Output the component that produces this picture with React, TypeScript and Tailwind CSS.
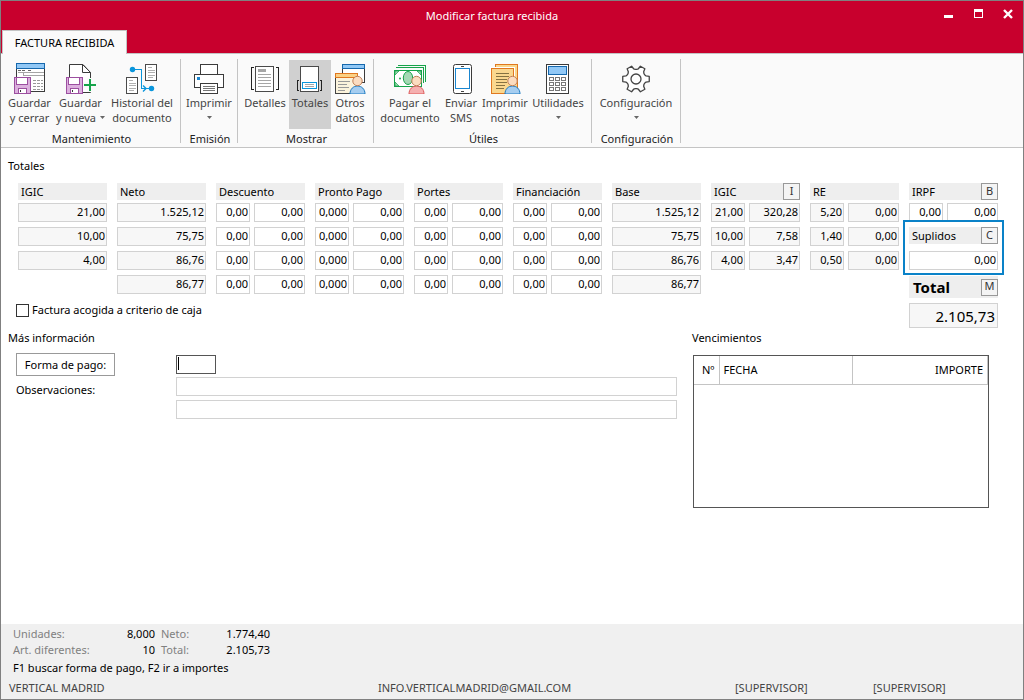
import type { ReactNode } from "react";

const gearPath = (() => {
  const points: string[] = [];
  const at = (radius: number, degrees: number) => {
    const a = (degrees * Math.PI) / 180;
    return `${(16 + radius * Math.cos(a)).toFixed(2)} ${(17 + radius * Math.sin(a)).toFixed(2)}`;
  };
  for (let i = 0; i < 6; i++) {
    const c = i * 60;
    points.push(at(9.6, c - 26), at(10.5, c - 17), at(13.5, c - 11), at(13.5, c + 11), at(10.5, c + 17), at(9.6, c + 26));
  }
  return `M${points.join("L")}Z`;
})();

function Icon({ children }: { children: ReactNode }) {
  return (
    <svg viewBox="0 0 32 32" className="block h-8 w-8 shrink-0" fill="none" aria-hidden="true">
      {children}
    </svg>
  );
}

function Floppy({ x = 0 }: { x?: number }) {
  return (
    <g transform={`translate(${x} 0)`} shapeRendering="crispEdges">
      <rect x="0.5" y="15.5" width="16" height="16" fill="#dcb0de" stroke="#9c4fa0" />
      <rect x="2.5" y="15.5" width="11" height="7" fill="#fff" stroke="#9c4fa0" />
      <rect x="4.5" y="26.5" width="8" height="5" fill="#fff" stroke="#9c4fa0" />
      <path d="M6.5 28v2" stroke="#333" />
    </g>
  );
}

function Person({ body, line, x = 0 }: { body: string; line: string; x?: number }) {
  return (
    <g transform={`translate(${x} 0)`}>
      <path d="M16 32c0-5 3.400-8 7.500-8s7.500 3 7.500 8z" fill={body} stroke={line} />
      <circle cx="23.500" cy="19" r="4.700" fill="#fbdcc0" stroke="#c08058" />
    </g>
  );
}

const icons = {
  saveClose: (
    <Icon>
      <g shapeRendering="crispEdges">
        <rect x="2.5" y="1.5" width="28" height="28" fill="#fff" stroke="#3b3b3b" />
        <rect x="2.5" y="1.5" width="28" height="5" fill="#91c8f6" stroke="#1668ad" />
        <path d="M4 10.500h26M9.500 10v4M9 13.500h21" stroke="#a5a5a5" />
        <path d="M4 8.500h3M8 8.500h3M14 8.500h3" stroke="#666" />
        <path d="M19 18.500h10M19 21.500h10M19 24.500h10M19 27.500h10" stroke="#999" strokeDasharray="3 1" />
      </g>
      <Floppy />
    </Icon>
  ),
  saveNew: (
    <Icon>
      <path d="M4.500 2.500H18l7.500 8V30.500H4.500z" fill="#fff" stroke="#3b3b3b" />
      <path d="M17.500 2.500v8h8z" fill="#fff" stroke="#3b3b3b" />
      <Floppy x={1} />
      <path d="M25 16v14M18 23h14" stroke="#fafafa" strokeWidth="5" />
      <path d="M25 17v12M19 23h12" stroke="#16a34a" strokeWidth="2" shapeRendering="crispEdges" />
    </Icon>
  ),
  history: (
    <Icon>
      <g shapeRendering="crispEdges">
        <rect x="19.500" y="2.500" width="11" height="16" fill="#fff" stroke="#4a4a4a" />
        <rect x="0.500" y="15.500" width="11" height="16" fill="#fff" stroke="#4a4a4a" />
        <path d="M22 5.500h4M22 8.500h7M22 10.500h7M22 13.500h7M22 15.500h5M3 18.500h4M3 21.500h7M3 23.500h7M3 26.500h7M3 28.500h5" stroke="#b0b0b0" />
        <path d="M6 7.500h9.500v19h9" stroke="#0a96dc" />
      </g>
      <path d="M17 23.500l3 3-3 3" stroke="#0a96dc" strokeWidth="1.400" />
      <circle cx="6.500" cy="7.500" r="2.700" fill="#0a96dc" />
      <circle cx="25.500" cy="26.500" r="2.700" fill="#0a96dc" />
    </Icon>
  ),
  printer: (
    <Icon>
      <g shapeRendering="crispEdges" stroke="#3b3b3b">
        <rect x="7.500" y="2.500" width="17" height="10" fill="#fff" />
        <rect x="1.500" y="12.500" width="29" height="13" fill="#fff" />
        <rect x="7.500" y="21.500" width="17" height="10" fill="#fff" />
        <path d="M10 24.500h12M10 26.500h12M10 28.500h12" stroke="#777" />
        <rect x="4" y="15" width="3" height="3" fill="#1a86d0" stroke="none" />
      </g>
    </Icon>
  ),
  details: (
    <Icon>
      <g shapeRendering="crispEdges">
        <path d="M5 5.500H2.500v22H5M27 5.500h2.500v22H27" stroke="#222" />
        <rect x="6.500" y="4.500" width="18" height="25" fill="#fff" stroke="#4a4a4a" />
        <rect x="9" y="7" width="8" height="3" fill="#a6a6a6" />
        <path d="M9 12.500h13M9 15.500h13M9 18.500h13M9 21.500h13M9 24.500h13" stroke="#a6a6a6" />
      </g>
    </Icon>
  ),
  totals: (
    <Icon>
      <g shapeRendering="crispEdges">
        <path d="M5 18.500H3.500v10H5M26 18.500h1.500v10H26" stroke="#222" />
        <rect x="6.500" y="4.500" width="18" height="25" fill="#fff" stroke="#4a4a4a" />
        <rect x="8.500" y="20.500" width="14" height="6" fill="#fff" stroke="#0a96dc" />
        <path d="M11 22.500h9M11 24.500h9" stroke="#a6a6a6" />
      </g>
    </Icon>
  ),
  other: (
    <Icon>
      <g shapeRendering="crispEdges">
        <rect x="8.500" y="2.500" width="22" height="18" fill="#fff" stroke="#3b3b3b" />
        <rect x="8.500" y="2.500" width="22" height="4" fill="#91c8f6" stroke="#1668ad" />
        <rect x="1.500" y="11.500" width="22" height="20" fill="#fbf3dc" stroke="#444" />
        <rect x="1.500" y="11.500" width="22" height="4" fill="#fbd184" stroke="#e07820" />
        <path d="M4 19.500h12M4 22.500h9M4 25.500h11M4 28.500h7" stroke="#999" />
      </g>
      <Person body="#a5cdf0" line="#1a78c0" />
    </Icon>
  ),
  pay: (
    <Icon>
      <g shapeRendering="crispEdges">
        <path d="M4 3.500h27.500v16M2 5.500h27.500v15" stroke="#16a34a" />
        <rect x="0.500" y="8.500" width="27" height="16" fill="#fff" stroke="#16a34a" />
      </g>
      <path d="M1 9h4l-4 4zM27 9h-4l4 4zM1 24h4l-4-4z" fill="#a4d8b4" stroke="#16a34a" strokeWidth="0.700" />
      <ellipse cx="14" cy="16" rx="4.700" ry="6.500" fill="#a4d8b4" stroke="#16a34a" />
      <circle cx="6" cy="16.500" r="1" fill="#16a34a" />
      <Person body="#f5b0b0" line="#dc5858" x={-1} />
    </Icon>
  ),
  sms: (
    <Icon>
      <rect x="8.500" y="2.500" width="18" height="29" rx="2" fill="#fff" stroke="#3b3b3b" />
      <rect x="10.500" y="6.500" width="14" height="20" stroke="#1a86d0" shapeRendering="crispEdges" />
      <path d="M16 4.500h3M16 29.500h3" stroke="#444" shapeRendering="crispEdges" />
    </Icon>
  ),
  notes: (
    <Icon>
      <g shapeRendering="crispEdges" stroke="#e07820">
        <rect x="6.500" y="2.500" width="22" height="24" fill="#fad78e" />
        <rect x="2.500" y="6.500" width="22" height="25" fill="#fad78e" stroke="#fff" strokeWidth="3" />
        <rect x="2.500" y="6.500" width="22" height="25" fill="#fad78e" />
        <path d="M7 11.500h13M7 14.500h13M7 17.500h11M7 20.500h11M7 23.500h9M7 26.500h8" stroke="#857242" />
      </g>
      <Person body="#a5cdf0" line="#1a78c0" />
    </Icon>
  ),
  calculator: (
    <Icon>
      <g shapeRendering="crispEdges">
        <rect x="4.500" y="2.500" width="22" height="29" fill="#fff" stroke="#3b3b3b" />
        <rect x="6.500" y="4.500" width="18" height="8" fill="#91c8f6" stroke="#1668ad" />
        {[15.5, 20.5, 25.5].map((y) =>
          [7.5, 13.5, 19.5].map((x) => <rect key={`${x}-${y}`} x={x} y={y} width="4" height="3" stroke="#777" />),
        )}
      </g>
    </Icon>
  ),
  gear: (
    <Icon>
      <path d={gearPath} stroke="#444" strokeWidth="1.300" strokeLinejoin="round" fill="#fff" />
      <circle cx="16" cy="17" r="5" stroke="#444" strokeWidth="1.300" />
    </Icon>
  ),
};

function Caret() {
  return (
    <svg viewBox="0 0 5 3" className="inline-block h-[3px] w-[5px] align-middle" aria-hidden="true">
      <path d="M0 0h5L2.500 3z" fill="#666" />
    </svg>
  );
}

type Tool = { width: string; icon: ReactNode; first: string; second?: string; menu?: boolean; active?: boolean };

function ToolButton({ width, icon, first, second, menu, active }: Tool) {
  return (
    <button
      type="button"
      aria-pressed={active}
      className={`flex h-[69px] shrink-0 flex-col items-center whitespace-nowrap pt-0.5 leading-[15px] text-[#444] ${width} ${active ? "bg-[#d0d0d0]" : ""}`}
    >
      {icon}
      <span className="mt-px">{first}</span>
      <span className="flex h-[15px] items-center gap-1">
        {second}
        {menu && <Caret />}
      </span>
    </button>
  );
}

function ToolGroup({ label, pad, tools }: { label: string; pad: string; tools: Tool[] }) {
  return (
    <section aria-label={label} className="flex flex-col border-r border-[#c4c4c4] pt-px">
      <div className={`flex ${pad}`}>
        {tools.map((tool) => (
          <ToolButton key={tool.first + tool.second} {...tool} />
        ))}
      </div>
      <div className="mt-0.5 whitespace-nowrap pl-0.5 text-center leading-[15px] text-[#222]">{label}</div>
    </section>
  );
}

const groups: { label: string; pad: string; tools: Tool[] }[] = [
  {
    label: "Mantenimiento",
    pad: "pl-[3px] pr-0.5",
    tools: [
      { width: "w-[51px]", icon: icons.saveClose, first: "Guardar", second: "y cerrar" },
      { width: "w-[51px]", icon: icons.saveNew, first: "Guardar", second: "y nueva", menu: true },
      { width: "w-[72px]", icon: icons.history, first: "Historial del", second: "documento" },
    ],
  },
  { label: "Emisión", pad: "", tools: [{ width: "w-[56px]", icon: icons.printer, first: "Imprimir", menu: true }] },
  {
    label: "Mostrar",
    pad: "pl-[3px] pr-1",
    tools: [
      { width: "w-[48px]", icon: icons.details, first: "Detalles" },
      { width: "w-[42px]", icon: icons.totals, first: "Totales", active: true },
      { width: "w-[38px]", icon: icons.other, first: "Otros", second: "datos" },
    ],
  },
  {
    label: "Útiles",
    pad: "pl-1 pr-[5px]",
    tools: [
      { width: "w-[64px]", icon: icons.pay, first: "Pagar el", second: "documento" },
      { width: "w-[38px]", icon: icons.sms, first: "Enviar", second: "SMS" },
      { width: "w-[50px]", icon: icons.notes, first: "Imprimir", second: "notas" },
      { width: "w-[56px]", icon: icons.calculator, first: "Utilidades", menu: true },
    ],
  },
  { label: "Configuración", pad: "", tools: [{ width: "w-[88px]", icon: icons.gear, first: "Configuración", menu: true }] },
];

type Column = { name: string; rows: string[][]; editable?: boolean; letter?: string };

const zeros = (rate: string) => [0, 1, 2, 3].map(() => [rate, "0,00"]);

const columns: Column[] = [
  { name: "IGIC", rows: [["21,00"], ["10,00"], ["4,00"]] },
  { name: "Neto", rows: [["1.525,12"], ["75,75"], ["86,76"], ["86,77"]] },
  { name: "Descuento", rows: zeros("0,00"), editable: true },
  { name: "Pronto Pago", rows: zeros("0,000"), editable: true },
  { name: "Portes", rows: zeros("0,00"), editable: true },
  { name: "Financiación", rows: zeros("0,00"), editable: true },
  { name: "Base", rows: [["1.525,12"], ["75,75"], ["86,76"], ["86,77"]] },
  { name: "IGIC", rows: [["21,00", "320,28"], ["10,00", "7,58"], ["4,00", "3,47"]], letter: "I" },
  { name: "RE", rows: [["5,20", "0,00"], ["1,40", "0,00"], ["0,50", "0,00"]] },
];

function ColumnHeader({ name, letter }: { name: string; letter?: string }) {
  return (
    <div className="flex h-[17px] items-center justify-between bg-[#eee] pl-[3px]">
      <span className="whitespace-nowrap">{name}</span>
      {letter && <LetterButton letter={letter} />}
    </div>
  );
}

function LetterButton({ letter }: { letter: string }) {
  return (
    <button
      type="button"
      className="flex h-[17px] w-[17px] items-center justify-center border border-[#999] bg-[#f4f4f4] pb-0.5 text-[#333]"
    >
      {letter}
    </button>
  );
}

function Amount({ value, label, editable, grow }: { value: string; label: string; editable?: boolean; grow: boolean }) {
  return (
    <input
      aria-label={label}
      defaultValue={value}
      readOnly={!editable}
      className={`h-[19px] min-w-0 border border-[#d2d2d2] pb-0.5 pr-px text-right outline-none ${grow ? "flex-1" : "w-[34px]"} ${editable ? "bg-white" : "bg-[#f7f7f7]"}`}
    />
  );
}

function AmountRow({ cells, name, row, editable }: { cells: string[]; name: string; row: number; editable?: boolean }) {
  return (
    <div className="flex gap-1">
      {cells.map((value, i) => (
        <Amount
          key={i}
          value={value}
          label={`${name} ${row}${cells.length > 1 && i === 0 ? " %" : ""}`}
          editable={editable}
          grow={i === cells.length - 1}
        />
      ))}
    </div>
  );
}

function AmountColumn({ name, rows, editable, letter }: Column) {
  return (
    <div className="flex min-w-0 flex-col gap-[3px]">
      <ColumnHeader name={name} letter={letter} />
      <div className="flex flex-col gap-[5px]">
        {rows.map((cells, i) => (
          <AmountRow key={i} cells={cells} name={name} row={i + 1} editable={editable} />
        ))}
      </div>
    </div>
  );
}

export default function App() {
  return (
    <div className="flex min-h-screen flex-col border border-[#808080] bg-white font-['Noto_Sans','Open_Sans',sans-serif] text-[11px] leading-4 text-black">
      <header className="bg-[#c8002d]">
        <div className="flex h-[29px] items-center">
          <h1 className="flex-1 pl-[50px] text-center text-white">Modificar factura recibida</h1>
          <div className="flex pb-1 text-white">
            <button type="button" aria-label="Minimizar" className="flex h-5 w-[30px] items-center justify-center pl-0.5">
              <svg viewBox="0 0 10 10" className="h-2.5 w-2.5" shapeRendering="crispEdges">
                <path d="M0 6h9v3H0z" fill="currentColor" />
              </svg>
            </button>
            <button type="button" aria-label="Maximizar" className="flex h-5 w-[30px] items-center justify-center pl-0.5">
              <svg viewBox="0 0 10 10" className="h-2.5 w-2.5" shapeRendering="crispEdges">
                <path d="M0 0h9v9H0zM1 3v5h7V3z" fill="currentColor" fillRule="evenodd" />
              </svg>
            </button>
            <button type="button" aria-label="Cerrar" className="flex h-5 w-[30px] items-center justify-center">
              <svg viewBox="0 0 10 10" className="h-2.5 w-2.5">
                <path d="M1 1l8 8M9 1L1 9" stroke="currentColor" strokeWidth="2.400" />
              </svg>
            </button>
          </div>
        </div>
        <nav className="flex h-[24px] border-b border-[#c4c4c4] pl-px">
          <button type="button" className="h-[25px] w-[125px] shrink-0 border border-b-0 border-[#c4c4c4] bg-[#fafafa]">
            FACTURA RECIBIDA
          </button>
        </nav>
      </header>

      <div className="flex h-[94px] border-b border-[#c4c4c4] bg-[#fafafa] pb-1 pt-[5px]">
        {groups.map((group) => (
          <ToolGroup key={group.label} {...group} />
        ))}
      </div>

      <main className="flex-1 pb-4 pt-2.5">
        <h2 className="px-[7px]">Totales</h2>
        <div className="mt-[9px] grid grid-cols-10 grid-rows-[auto_1fr] gap-x-2.5 pl-[17px] pr-[25px]">
          {columns.map((column, i) => (
            <AmountColumn key={i} {...column} />
          ))}
          <div className="row-span-2 flex min-w-0 flex-col">
            <ColumnHeader name="IRPF" letter="B" />
            <div className="mt-[3px]">
              <AmountRow cells={["0,00", "0,00"]} name="IRPF" row={1} editable />
            </div>
            <div className="relative mt-[5px] flex flex-col gap-[7px]">
              <div className="pointer-events-none absolute -inset-x-1.5 -bottom-[5px] -top-[7px] border-2 border-[#0a82c8]" />
              <ColumnHeader name="Suplidos" letter="C" />
              <AmountRow cells={["0,00"]} name="Suplidos" row={1} editable />
            </div>
            <div className="mt-1.5 flex h-[22px] items-center justify-between bg-[#eee] pl-1">
              <span className="text-[15px] font-bold">Total</span>
              <LetterButton letter="M" />
            </div>
            <input
              aria-label="Total"
              readOnly
              defaultValue="2.105,73"
              className="mt-[5px] h-[25px] w-full min-w-0 border border-[#d2d2d2] bg-[#f7f7f7] pr-0.5 text-right text-[15px] outline-none"
            />
          </div>
          <label className="col-span-9 -ml-0.5 mt-2 flex h-4 items-center gap-[3px] self-start justify-self-start">
            <input type="checkbox" className="h-[13px] w-[13px] appearance-none border border-[#333] bg-white" />
            Factura acogida a criterio de caja
          </label>
        </div>

        <div className="mt-0.5 flex gap-4 pr-[34px]">
          <section className="flex-1 pl-[7px]">
            <h2>Más información</h2>
            <div className="mt-[7px] grid grid-cols-[160px_1fr] pl-2">
              <button type="button" className="h-[23px] w-[99px] border border-[#999] bg-white">
                Forma de pago:
              </button>
              <div className="relative mt-0.5 w-10">
                <input aria-label="Forma de pago" className="block h-[19px] w-full border border-[#555] bg-white px-0.5 outline-none" />
                <span className="absolute left-0.5 top-0.5 h-[13px] w-px bg-black" />
              </div>
              <label htmlFor="notes-1" className="pt-1.5">
                Observaciones:
              </label>
              <div className="mt-px flex flex-col gap-1">
                <input id="notes-1" className="h-[19px] w-full border border-[#d2d2d2] bg-white px-0.5 outline-none" />
                <input aria-label="Observaciones, línea 2" className="h-[19px] w-full border border-[#d2d2d2] bg-white px-0.5 outline-none" />
              </div>
            </div>
          </section>
          <section className="w-[296px]">
            <h2 className="-ml-px">Vencimientos</h2>
            <div className="mt-[9px] h-[153px] border border-[#555] bg-white">
              <table className="w-full table-fixed border-collapse">
                <thead>
                  <tr className="h-7 border-b border-[#c4c4c4]">
                    <th scope="col" className="w-[25px] border-r border-[#c4c4c4] pr-1 text-right font-normal">Nº</th>
                    <th scope="col" className="w-[133px] border-r border-[#c4c4c4] pl-1 text-left font-normal">FECHA</th>
                    <th scope="col" className="border-r border-[#c4c4c4] pr-1 text-right font-normal">IMPORTE</th>
                  </tr>
                </thead>
                <tbody />
              </table>
            </div>
          </section>
        </div>
      </main>

      <footer className="bg-[#f0f0f0] pb-[3px] pt-0.5">
        <dl className="grid grid-cols-[100px_42px_6px_45px_64px] pl-3">
          <dt className="text-[#808080]">Unidades:</dt>
          <dd className="text-right">8,000</dd>
          <dt className="col-start-4 text-[#808080]">Neto:</dt>
          <dd className="text-right">1.774,40</dd>
          <dt className="text-[#808080]">Art. diferentes:</dt>
          <dd className="text-right">10</dd>
          <dt className="col-start-4 text-[#808080]">Total:</dt>
          <dd className="text-right">2.105,73</dd>
        </dl>
        <p className="mt-0.5 pl-3">F1 buscar forma de pago, F2 ir a importes</p>
        <div className="mt-1 grid grid-cols-[369fr_357fr_138fr_150fr] pl-2 text-[#444]">
          <span>VERTICAL MADRID</span>
          <span>INFO.VERTICALMADRID@GMAIL.COM</span>
          <span>[SUPERVISOR]</span>
          <span>[SUPERVISOR]</span>
        </div>
      </footer>
    </div>
  );
}
